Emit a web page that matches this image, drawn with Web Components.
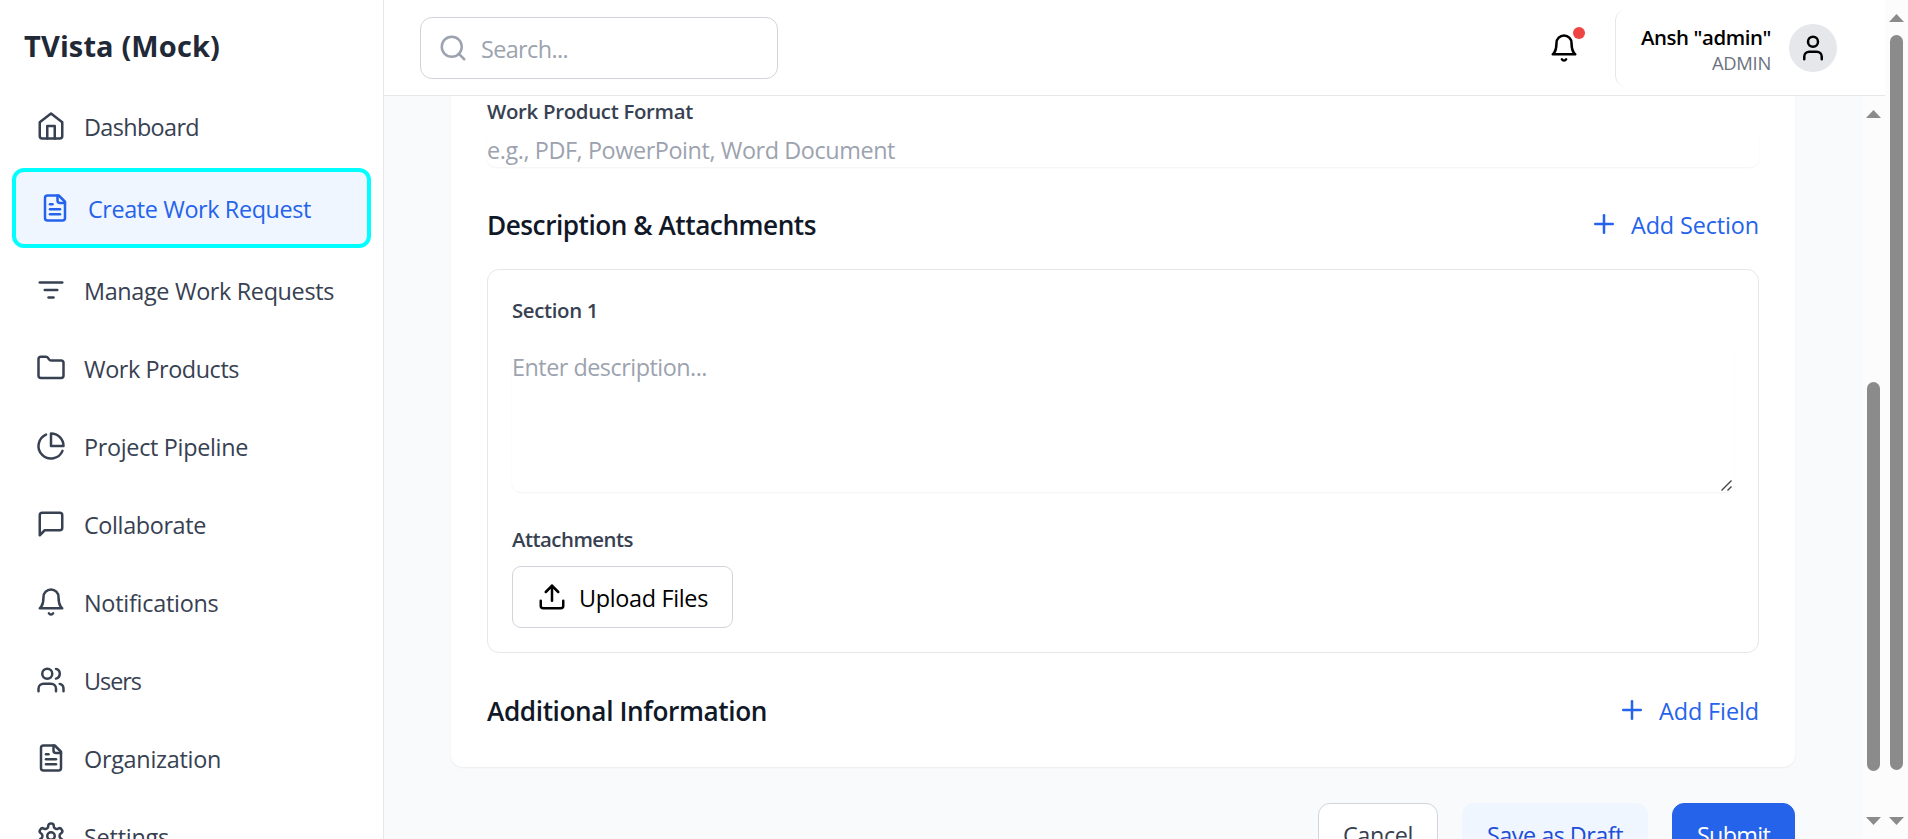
<!DOCTYPE html>
<html lang="en">
<head>
<meta charset="utf-8">
<title>TVista (Mock)</title>
<style>
  html, body { margin: 0; height: 100%; overflow: hidden; background: #fff; }
  body { font-family: "Open Sans", "Noto Sans", sans-serif; font-size: 23.4px; font-weight: 400; line-height: 36px; color: #000; }
</style>
</head>
<body>
<tv-app></tv-app>
<script>
const ICONS = {
  home: '<path d="m3 9 9-7 9 7v11a2 2 0 0 1-2 2H5a2 2 0 0 1-2-2z"/><path d="M9 22V12h6v10"/>',
  file: '<path d="M15 2H6a2 2 0 0 0-2 2v16a2 2 0 0 0 2 2h12a2 2 0 0 0 2-2V7Z"/><path d="M14 2v4a2 2 0 0 0 2 2h4"/><path d="M10 9H8"/><path d="M16 13H8"/><path d="M16 17H8"/>',
  filter: '<path d="M3 6h18"/><path d="M7 12h10"/><path d="M10 18h4"/>',
  folder: '<path d="M20 20a2 2 0 0 0 2-2V8a2 2 0 0 0-2-2h-7.9a2 2 0 0 1-1.69-.9L9.6 3.9A2 2 0 0 0 7.93 3H4a2 2 0 0 0-2 2v13a2 2 0 0 0 2 2Z"/>',
  pie: '<path d="M21.21 15.89A10 10 0 1 1 8 2.83"/><path d="M22 12A10 10 0 0 0 12 2v10z"/>',
  chat: '<path d="M21 15a2 2 0 0 1-2 2H7l-4 4V5a2 2 0 0 1 2-2h14a2 2 0 0 1 2 2z"/>',
  bell: '<path d="M6 8a6 6 0 0 1 12 0c0 7 3 9 3 9H3s3-2 3-9"/><path d="M10.3 21a1.94 1.94 0 0 0 3.4 0"/>',
  users: '<path d="M16 21v-2a4 4 0 0 0-4-4H6a4 4 0 0 0-4 4v2"/><circle cx="9" cy="7" r="4"/><path d="M22 21v-2a4 4 0 0 0-3-3.87"/><path d="M16 3.13a4 4 0 0 1 0 7.75"/>',
  gear: '<path d="M12.22 2h-.44a2 2 0 0 0-2 2v.18a2 2 0 0 1-1 1.73l-.43.25a2 2 0 0 1-2 0l-.15-.08a2 2 0 0 0-2.73.73l-.22.38a2 2 0 0 0 .73 2.73l.15.1a2 2 0 0 1 1 1.72v.51a2 2 0 0 1-1 1.74l-.15.09a2 2 0 0 0-.73 2.73l.22.38a2 2 0 0 0 2.73.73l.15-.08a2 2 0 0 1 2 0l.43.25a2 2 0 0 1 1 1.73V20a2 2 0 0 0 2 2h.44a2 2 0 0 0 2-2v-.18a2 2 0 0 1 1-1.73l.43-.25a2 2 0 0 1 2 0l.15.08a2 2 0 0 0 2.73-.73l.22-.39a2 2 0 0 0-.73-2.73l-.15-.08a2 2 0 0 1-1-1.74v-.5a2 2 0 0 1 1-1.74l.15-.09a2 2 0 0 0 .73-2.73l-.22-.38a2 2 0 0 0-2.73-.73l-.15.08a2 2 0 0 1-2 0l-.43-.25a2 2 0 0 1-1-1.73V4a2 2 0 0 0-2-2z"/><circle cx="12" cy="12" r="3"/>',
  search: '<circle cx="11" cy="11" r="8"/><path d="m21 21-4.3-4.3"/>',
  user: '<path d="M19 21v-2a4 4 0 0 0-4-4H9a4 4 0 0 0-4 4v2"/><circle cx="12" cy="7" r="4"/>',
  plus: '<path d="M5 12h14"/><path d="M12 5v14"/>',
  upload: '<path d="M21 15v4a2 2 0 0 1-2 2H5a2 2 0 0 1-2-2v-4"/><path d="m17 8-5-5-5 5"/><path d="M12 3v12"/>'
};

function define(name, html, setup) {
  const tpl = document.createElement('template');
  tpl.innerHTML = html;
  customElements.define(name, class extends HTMLElement {
    connectedCallback() {
      if (this.shadowRoot) return;
      const root = this.attachShadow({ mode: 'open' });
      root.append(tpl.content.cloneNode(true));
      if (setup) setup(this, root);
    }
  });
}

define('tv-icon', `
  <style>:host{display:block;flex:none;width:30px;height:30px}svg{display:block}</style>
  <svg width="30" height="30" viewBox="0 0 24 24" fill="none" stroke="currentColor" stroke-width="2" stroke-linecap="round" stroke-linejoin="round"></svg>`,
  (el, root) => { root.querySelector('svg').innerHTML = ICONS[el.getAttribute('name')]; });

/* A single line of text tracked out or in to an exact advance width. */
define('tv-text', `
  <style>:host{display:block;flex:none;white-space:nowrap;padding-top:1px;margin-bottom:-1px}span{display:inline-block}</style>
  <span><slot></slot></span>`,
  (el, root) => {
    const w = +el.getAttribute('w'), span = root.querySelector('span');
    if (!w) return;
    const n = el.textContent.length;
    span.style.letterSpacing = ((w - span.getBoundingClientRect().width) / n).toFixed(3) + 'px';
    el.style.width = w + 'px';
  });

define('tv-nav-item', `
  <style>
    :host{display:flex;align-items:center;gap:18px;height:72px;padding:0 24px;color:#374151;border-radius:9px;flex:none}
    :host([active]){color:#2563eb;background:#eff6ff;border:4px solid #0ff;border-radius:12px}
  </style>
  <slot></slot>`,
  (el, root) => {
    const icon = document.createElement('tv-icon');
    icon.setAttribute('name', el.getAttribute('icon'));
    root.insertBefore(icon, root.querySelector('slot'));
  });

define('tv-sidebar', `
  <style>
    :host{display:flex;flex-direction:column;box-sizing:border-box;width:384px;height:839px;overflow:hidden;background:#fff;border-right:1px solid #e5e7eb}
    h1{flex:none;margin:0;padding:27px 24px 0;height:63px;font-size:29px;font-weight:700;line-height:36px;color:#1f2937}
    nav{display:flex;flex-direction:column;gap:6px;padding:0 12px}
  </style>
  <h1><tv-text w="196">TVista (Mock)</tv-text></h1>
  <nav><slot></slot></nav>`);

define('tv-header', `
  <style>
    :host{display:flex;align-items:center;box-sizing:border-box;height:96px;padding:0 36px;background:#fff;border-bottom:1px solid #e5e7eb}
    .search{display:flex;align-items:center;gap:13px;box-sizing:border-box;width:358px;height:62px;padding-left:17px;border:1px solid #d1d5db;border-radius:12px;color:#9ca3af}
    .bell{position:relative;margin-left:auto;margin-right:36px}
    .dot{position:absolute;left:24px;top:-6px;width:12px;height:12px;border-radius:50%;background:#ef4444}
    .user{display:flex;align-items:center;box-sizing:border-box;height:78px;width:234px;padding-left:24px;border-left:1px solid #e5e7eb;border-radius:12px}
    .who{display:flex;flex-direction:column;align-items:flex-end;width:131px;margin-right:18px}
    .name{font-size:20.4px;font-weight:600;line-height:30px}
    .role{font-size:18.4px;line-height:24px;color:#6b7280;margin-top:-1px}
    .avatar{display:flex;align-items:center;justify-content:center;width:48px;height:48px;border-radius:50%;background:#e5e7eb}
  </style>
  <div class="search"><tv-icon name="search"></tv-icon><tv-text w="87">Search...</tv-text></div>
  <div class="bell"><tv-icon name="bell"></tv-icon><div class="dot"></div></div>
  <div class="user">
    <div class="who"><tv-text class="name" w="130">Ansh "admin"</tv-text><tv-text class="role" w="59">ADMIN</tv-text></div>
    <div class="avatar"><tv-icon name="user"></tv-icon></div>
  </div>`);

define('tv-scrollbar', `
  <style>
    :host{display:flex;flex-direction:column;align-items:center;box-sizing:border-box;width:23px;flex:none;background:#fcfcfc;padding:14px 0}
    svg{display:block;flex:none}
    i{display:block;width:13px;border-radius:6.5px;background:#8b8b8b;margin-top:var(--gap);height:var(--len)}
    .down{margin-top:auto}
  </style>
  <svg width="15" height="8"><path d="M7.5 0 15 8H0z" fill="#8b8b8b"/></svg>
  <i></i>
  <svg class="down" width="15" height="8"><path d="M0 0h15L7.5 8z" fill="#8b8b8b"/></svg>`);

define('tv-section-head', `
  <style>
    :host{display:flex;align-items:center;justify-content:space-between;height:36px}
    .title{font-size:26.2px;font-weight:600;color:#111827}
    .add{display:flex;align-items:center;gap:12px;color:#2563eb}
  </style>
  <div class="title"><slot></slot></div>
  <div class="add"><tv-icon name="plus"></tv-icon><slot name="action"></slot></div>`);

define('tv-button', `
  <style>
    :host{display:flex;align-items:center;gap:12px;box-sizing:border-box;height:62px;width:max-content;padding:0 24px;border:1px solid #d1d5db;border-radius:12px;background:#fff}
    :host([kind=soft]){background:#eff6ff;border-color:#eff6ff;color:#1d4ed8}
    :host([kind=primary]){background:#2563eb;border-color:#2563eb;color:#fff}
    :host([kind=plain]){color:#374151}
  </style>
  <slot></slot>`);

define('tv-form', `
  <style>
    :host{display:flex;flex-direction:column;width:1344px;margin:0 auto}
    .card{box-sizing:border-box;height:671px;padding:0 36px;background:#fff;border-radius:0 0 12px 12px;box-shadow:0 1px 2px rgba(0,0,0,.06)}
    .label{font-size:20.4px;font-weight:600;line-height:30px;height:30px;padding:0;margin:0;color:#374151}
    .field{position:relative;box-sizing:border-box;border-radius:9px;color:#9ca3af;background:#fff;box-shadow:0 1px 2px rgba(0,0,0,.05)}
    .input{height:36px;margin:5px 0 39px}
    .box{box-sizing:border-box;height:384px;margin:27px 0 39px;padding:25px 24px 0;border:1px solid #e5e7eb;border-radius:12px}
    .area{height:145px;margin:22px 0 32px;padding:1px 0 0}
    .grip{position:absolute;right:2px;bottom:1px}
    .up{margin-top:12px;border-radius:9px}
    .actions{display:flex;justify-content:flex-end;gap:24px;margin-top:36px}
  </style>
  <div class="card">
    <tv-text class="label" w="206">Work Product Format</tv-text>
    <div class="field input"><tv-text w="408">e.g., PDF, PowerPoint, Word Document</tv-text></div>
    <tv-section-head><tv-text w="329">Description &amp; Attachments</tv-text><tv-text slot="action" w="128">Add Section</tv-text></tv-section-head>
    <div class="box">
      <tv-text class="label" w="86">Section 1</tv-text>
      <div class="field area"><tv-text w="195">Enter description...</tv-text>
        <svg class="grip" width="11" height="11" fill="none" stroke="#444" stroke-width="1.4"><path d="M.5 10.5l10-10M6.5 10.5l4-4"/></svg>
      </div>
      <tv-text class="label" w="121">Attachments</tv-text>
      <tv-button class="up"><tv-icon name="upload"></tv-icon><tv-text w="129">Upload Files</tv-text></tv-button>
    </div>
    <tv-section-head><tv-text w="280">Additional Information</tv-text><tv-text slot="action" w="100">Add Field</tv-text></tv-section-head>
  </div>
  <div class="actions">
    <tv-button kind="plain"><tv-text w="70">Cancel</tv-text></tv-button>
    <tv-button kind="soft"><tv-text w="136">Save as Draft</tv-text></tv-button>
    <tv-button kind="primary"><tv-text w="73">Submit</tv-text></tv-button>
  </div>`);

define('tv-app', `
  <style>
    :host{display:flex;width:1908px;height:839px;overflow:hidden}
    .col{display:flex;flex-direction:column;width:1501px}
    .main{display:flex;height:743px;background:#f8fafc}
    .view{flex:1;overflow:hidden}
    .outer{--gap:13px;--len:735px}
    .inner{--gap:264px;--len:389px}
  </style>
  <tv-sidebar>
    <tv-nav-item icon="home"><tv-text w="115">Dashboard</tv-text></tv-nav-item>
    <tv-nav-item icon="file" active><tv-text w="223">Create Work Request</tv-text></tv-nav-item>
    <tv-nav-item icon="filter"><tv-text w="250">Manage Work Requests</tv-text></tv-nav-item>
    <tv-nav-item icon="folder"><tv-text w="155">Work Products</tv-text></tv-nav-item>
    <tv-nav-item icon="pie"><tv-text w="164">Project Pipeline</tv-text></tv-nav-item>
    <tv-nav-item icon="chat"><tv-text w="122">Collaborate</tv-text></tv-nav-item>
    <tv-nav-item icon="bell"><tv-text w="134.5">Notifications</tv-text></tv-nav-item>
    <tv-nav-item icon="users"><tv-text w="57">Users</tv-text></tv-nav-item>
    <tv-nav-item icon="file"><tv-text w="137">Organization</tv-text></tv-nav-item>
    <tv-nav-item icon="gear"><tv-text w="85">Settings</tv-text></tv-nav-item>
  </tv-sidebar>
  <div class="col">
    <tv-header></tv-header>
    <div class="main"><div class="view"><tv-form></tv-form></div><tv-scrollbar class="inner"></tv-scrollbar></div>
  </div>
  <tv-scrollbar class="outer"></tv-scrollbar>`);
</script>
</body>
</html>
